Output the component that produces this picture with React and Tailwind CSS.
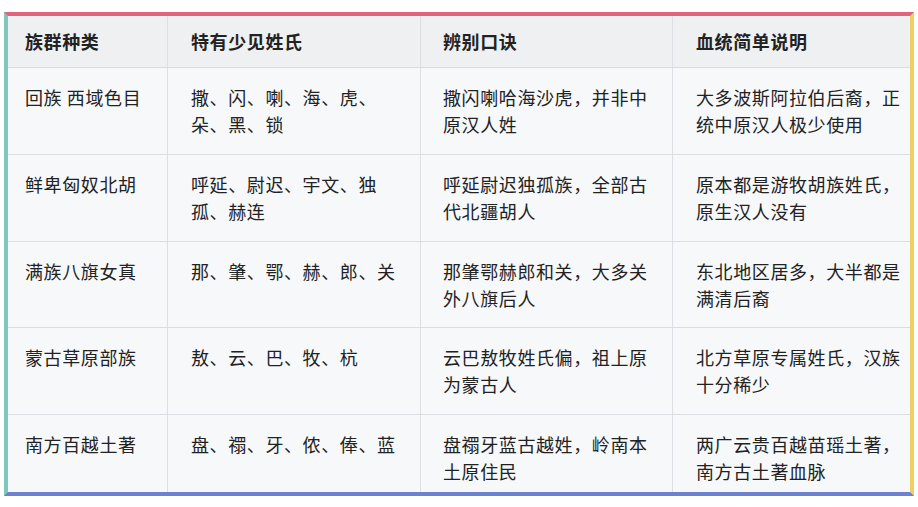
const headers = ["族群种类", "特有少见姓氏", "辨别口诀", "血统简单说明"];

const rows = [
  {
    h: "h-[87px]",
    cells: [["回族 西域色目"], ["撒、闪、喇、海、虎、", "朵、黑、锁"], ["撒闪喇哈海沙虎，并非中", "原汉人姓"], ["大多波斯阿拉伯后裔，正", "统中原汉人极少使用"]],
  },
  {
    h: "h-[87px]",
    cells: [["鲜卑匈奴北胡"], ["呼延、尉迟、宇文、独", "孤、赫连"], ["呼延尉迟独孤族，全部古", "代北疆胡人"], ["原本都是游牧胡族姓氏，", "原生汉人没有"]],
  },
  {
    h: "h-[86px]",
    cells: [["满族八旗女真"], ["那、肇、鄂、赫、郎、关"], ["那肇鄂赫郎和关，大多关", "外八旗后人"], ["东北地区居多，大半都是", "满清后裔"]],
  },
  {
    h: "h-[87px]",
    cells: [["蒙古草原部族"], ["敖、云、巴、牧、杭"], ["云巴敖牧姓氏偏，祖上原", "为蒙古人"], ["北方草原专属姓氏，汉族", "十分稀少"]],
  },
  {
    h: "h-[77px]",
    cells: [["南方百越土著"], ["盘、禤、牙、侬、俸、蓝"], ["盘禤牙蓝古越姓，岭南本", "土原住民"], ["两广云贵百越苗瑶土著，", "南方古土著血脉"]],
  },
];

const widths = ["w-[159px] pl-[17px]", "w-[253px] pl-[23px]", "w-[252px] pl-[22px]", "w-[238px] pl-[23px]"];

export default function App() {
  return (
    <div
      className="w-[918px] h-[507px] bg-white pt-[12px] pl-[4px]"
      style={{ fontFamily: '"Noto Sans CJK SC", "Noto Sans", sans-serif' }}
    >
      <div className="w-[910px] border-t-4 border-l-4 border-r-4 border-b-4 border-t-[#e2637b] border-l-[#7fc6bd] border-r-[#eed062] border-b-[#6c82d0] text-[#222]">
        <div className="flex h-[52px] bg-[#eef0f2] border-b border-[#d9dde2]">
          {headers.map((t, i) => (
            <div
              key={i}
              className={`${widths[i]} flex items-center text-[18px] tracking-[0.6px] font-semibold ${i > 0 ? "border-l border-[#dcdfe3]" : ""}`}
            >
              {t}
            </div>
          ))}
        </div>
        {rows.map((r, ri) => (
          <div
            key={ri}
            className={`flex ${r.h} bg-[#f6f8fa] ${ri < rows.length - 1 ? "border-b border-[#dadde2]" : ""}`}
          >
            {r.cells.map((lines, ci) => (
              <div
                key={ci}
                className={`${widths[ci]} pt-[16px] text-[18px] leading-[27px] tracking-[0.6px] ${ci > 0 ? "border-l border-[#dcdfe3]" : ""}`}
              >
                {lines.map((l, li) => (
                  <div key={li} className="whitespace-nowrap">{l}</div>
                ))}
              </div>
            ))}
          </div>
        ))}
      </div>
    </div>
  );
}
